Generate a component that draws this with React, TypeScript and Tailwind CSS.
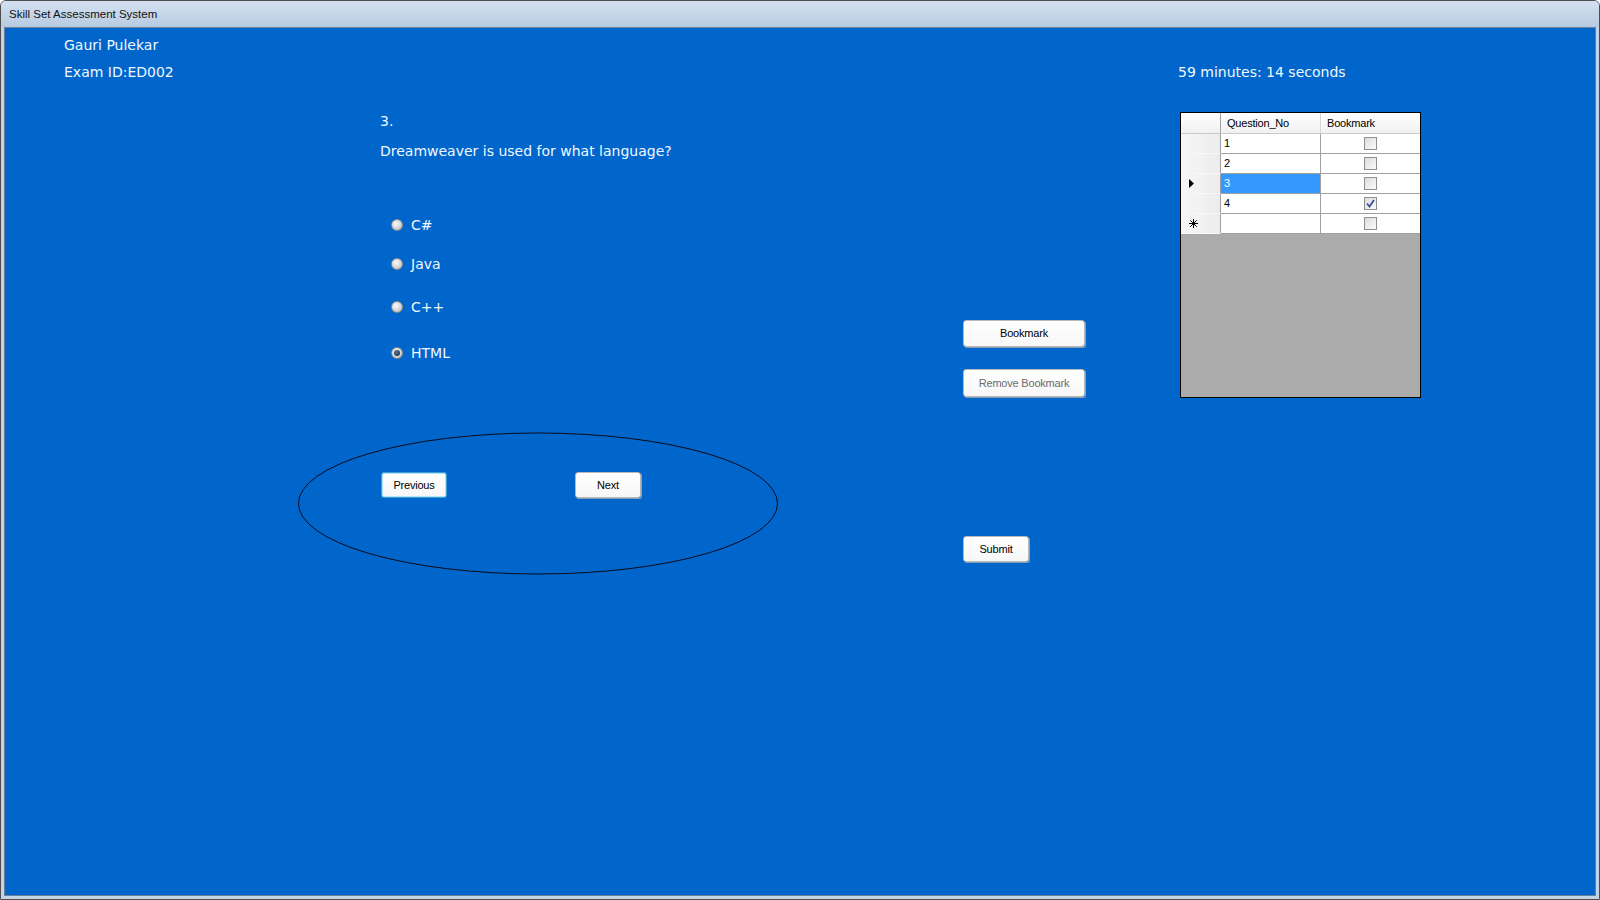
import React from "react";

const Radio = ({ checked }: { checked?: boolean }) => (
  <span className="w-[12px] h-[12px] rounded-full border border-[#8a8b8b] bg-[radial-gradient(circle_at_40%_35%,#fafafa_0%,#dcdcdc_45%,#b4b4b4_100%)] flex items-center justify-center shrink-0">
    {checked && <span className="w-[6px] h-[6px] rounded-full bg-[radial-gradient(circle_at_40%_35%,#5a7a98_0%,#0d2238_100%)]" />}
  </span>
);

const Option = ({ label, checked, mt }: { label: string; checked?: boolean; mt: string }) => (
  <div className={`flex items-center h-[18px] pl-[11px] gap-[8px] ${mt}`}>
    <Radio checked={checked} />
    <span>{label}</span>
  </div>
);

const Btn = ({ children, w, h, focus, disabled }: { children: React.ReactNode; w: string; h: string; focus?: boolean; disabled?: boolean }) => (
  <button
    className={`${w} ${h} flex items-center justify-center rounded-[3px] bg-gradient-to-b from-white to-[#f7f7f7] text-[11px] tracking-[-0.2px] font-['Liberation_Sans',Arial,sans-serif] ${
      disabled ? "text-[#6d6d6d]" : "text-black"
    } ${
      focus
        ? "border border-[#3d9fd9] shadow-[inset_0_0_0_1px_#b5e3fb]"
        : "border border-[#b8b8b8] shadow-[1px_1px_0_#8aa0b8]"
    }`}
  >
    {children}
  </button>
);

const CheckBox = ({ checked }: { checked?: boolean }) => (
  <span className="w-[13px] h-[13px] border border-[#8f8f8f] bg-gradient-to-br from-[#dcdcdc] to-[#fbfbfb] flex items-center justify-center">
    {checked && (
      <svg width="9" height="9" viewBox="0 0 9 9">
        <path d="M1 4.5 L3.5 7.5 L8 1" stroke="#3b4f9a" strokeWidth="1.8" fill="none" />
      </svg>
    )}
  </span>
);

const rows: { n: string; checked?: boolean; selected?: boolean; indicator?: "arrow" | "star" }[] = [
  { n: "1" },
  { n: "2" },
  { n: "3", selected: true, indicator: "arrow" },
  { n: "4", checked: true },
  { n: "", indicator: "star" },
];

export default function App() {
  return (
    <div className="w-[1600px] h-[900px] bg-[#c3d4e9] border border-[#4d4d4d] rounded-t-[6px] flex flex-col overflow-hidden">
      {/* Title bar */}
      <div className="h-[26px] shrink-0 flex items-center pl-[8px] pt-[2px] bg-gradient-to-b from-[#d4e1f1] to-[#b8cbe1] text-[11.5px] text-[#111] font-['Liberation_Sans',Arial,sans-serif]">
        Skill Set Assessment System
      </div>
      {/* Client area */}
      <div className="flex-1 mx-[3px] mb-[3px] border border-[#6b7f96] bg-[#0066cc] text-[#f0f8ff] text-[14px] font-['DejaVu_Sans',Verdana,sans-serif] flex flex-col">
        {/* Header */}
        <div className="flex pl-[59px] pt-[8px]">
          <div className="w-[1114px] flex flex-col gap-[9px] leading-[18px]">
            <div>Gauri Pulekar</div>
            <div>Exam ID:ED002</div>
          </div>
          <div className="mt-[27px] leading-[18px]">59 minutes: 14 seconds</div>
        </div>

        {/* Main */}
        <div className="flex pl-[293px]">
          {/* Column A */}
          <div className="w-[480px] flex flex-col">
            <div className="pl-[82px] flex flex-col leading-[18px]">
              <div className="mt-[31px]">3.</div>
              <div className="mt-[12px]">Dreamweaver is used for what language?</div>
              <Option label="C#" mt="mt-[56px]" />
              <Option label="Java" mt="mt-[21px]" />
              <Option label="C++" mt="mt-[25px]" />
              <Option label="HTML" checked mt="mt-[28px]" />
            </div>
            <div className="relative w-[480px] h-[143px] mt-[70px]">
              <svg className="absolute inset-0" width="480" height="143" viewBox="0 0 480 143">
                <ellipse cx="240" cy="71.5" rx="239.5" ry="70.5" fill="none" stroke="#0a0a1a" strokeWidth="1" />
              </svg>
              <div className="relative flex pl-[83px] pt-[40px] gap-[128px]">
                <Btn w="w-[66px]" h="h-[26px]" focus>Previous</Btn>
                <Btn w="w-[66px]" h="h-[26px]">Next</Btn>
              </div>
            </div>
          </div>

          {/* Column B */}
          <div className="ml-[185px] w-[122px] flex flex-col items-start">
            <div className="mt-[239px]">
              <Btn w="w-[122px]" h="h-[27px]">Bookmark</Btn>
            </div>
            <div className="mt-[22px]">
              <Btn w="w-[122px]" h="h-[28px]" disabled>Remove Bookmark</Btn>
            </div>
            <div className="mt-[139px]">
              <Btn w="w-[66px]" h="h-[26px]">Submit</Btn>
            </div>
          </div>

          {/* Column C: grid */}
          <div className="ml-[95px] mt-[31px]">
            <div className="w-[241px] h-[286px] border border-black bg-[#ababab] flex flex-col text-[11px] text-black font-['Liberation_Sans',Arial,sans-serif]">
              <div className="h-[21px] flex bg-gradient-to-b from-white to-[#f1f1f1] border-b border-[#c9c9c9]">
                <div className="w-[40px] border-r border-[#a0a0a0]" />
                <div className="w-[100px] border-r border-[#d6d6d6] pl-[6px] flex items-center tracking-[-0.2px]">Question_No</div>
                <div className="flex-1 pl-[6px] flex items-center tracking-[-0.2px]">Bookmark</div>
              </div>
              {rows.map((r, i) => (
                <div key={i} className="h-[20px] flex">
                  <div className="w-[40px] bg-gradient-to-r from-[#f7f7f7] to-[#ececec] border-r border-b border-r-[#a0a0a0] border-b-[#f8f8f8] flex items-center pl-[8px]">
                    {r.indicator === "arrow" && (
                      <svg width="5" height="9" viewBox="0 0 5 9">
                        <path d="M0 0 L5 4.5 L0 9 Z" fill="#000" />
                      </svg>
                    )}
                    {r.indicator === "star" && (
                      <svg width="9" height="9" viewBox="0 0 9 9">
                        <path d="M4.5 0 V9 M0 4.5 H9 M1.3 1.3 L7.7 7.7 M7.7 1.3 L1.3 7.7" stroke="#000" strokeWidth="1" />
                      </svg>
                    )}
                  </div>
                  <div
                    className={`w-[100px] border-r border-b border-[#a0a0a0] pl-[3px] flex items-center ${
                      r.selected ? "bg-[#3399ff] text-white" : "bg-white"
                    }`}
                  >
                    {r.n}
                  </div>
                  <div className="flex-1 bg-white border-b border-[#a0a0a0] flex items-center justify-center">
                    <CheckBox checked={r.checked} />
                  </div>
                </div>
              ))}
            </div>
          </div>
        </div>
      </div>
    </div>
  );
}
